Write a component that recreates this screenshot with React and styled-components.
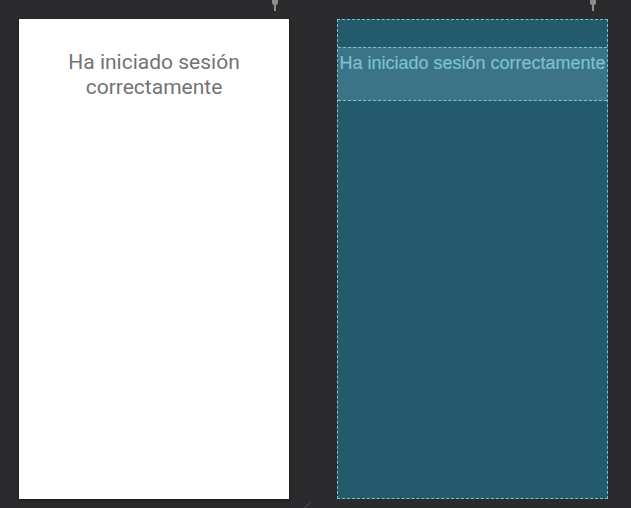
import React from 'react';
import styled, { createGlobalStyle } from 'styled-components';

const GlobalStyle = createGlobalStyle`
  html, body {
    margin: 0;
    padding: 0;
    background: #2b2b2d;
    overflow: hidden;
  }
  * {
    box-sizing: border-box;
  }
`;

const Editor = styled.div`
  position: relative;
  width: 631px;
  height: 508px;
  display: flex;
  gap: 48px;
  padding: 19px 0 0 19px;
  background: #2b2b2d;
  font-family: Roboto, 'Noto Sans', sans-serif;
`;

const Screen = styled.div`
  position: relative;
  width: ${p => p.$w}px;
  height: 480px;
`;

const DesignSurface = styled.div`
  width: 100%;
  height: 100%;
  background: #ffffff;
  box-shadow: 0 1px 3px rgba(0, 0, 0, 0.5);
  display: flex;
  flex-direction: column;
  align-items: center;
  padding-top: 31px;
`;

const Message = styled.div`
  width: 100%;
  text-align: center;
  font-size: 21px;
  line-height: 25px;
  color: #737373;
`;

const Blueprint = styled.div`
  width: 100%;
  height: 100%;
  background: #235b6c;
  border: 1px dashed #6fc6d8;
  padding-top: 27px;
`;

const BlueprintView = styled.div`
  height: 54px;
  background: #3a7486;
  border-top: 1px dashed #6fc6d8;
  border-bottom: 1px dashed #6fc6d8;
  font-family: 'Liberation Sans', Arial, sans-serif;
  font-size: 18px;
  line-height: 30px;
  color: #7ec0d2;
  text-align: center;
  white-space: nowrap;
  overflow: hidden;
  -webkit-text-stroke: 0.2px #7ec0d2;
`;

const Pin = styled.svg`
  position: absolute;
  top: -19px;
  right: ${p => p.$right}px;
`;

const ResizeHandle = styled.svg`
  position: absolute;
  left: 304px;
  bottom: 0;
`;

const PinIcon = ({ right }) => (
  <Pin $right={right} width="8" height="12" viewBox="0 0 8 12">
    <path d="M1 0h6v3.5L5 5.5V11H3V5.5L1 3.5z" fill="#8e8e8e" />
  </Pin>
);

export default function App() {
  return (
    <>
      <GlobalStyle />
      <Editor>
        <Screen $w={270}>
          <DesignSurface>
            <Message>
              Ha iniciado sesión
              <br />
              correctamente
            </Message>
          </DesignSurface>
          <PinIcon right={10} />
        </Screen>
        <Screen $w={271}>
          <Blueprint>
            <BlueprintView>Ha iniciado sesión correctamente</BlueprintView>
          </Blueprint>
          <PinIcon right={11} />
        </Screen>
        <ResizeHandle width="8" height="7" viewBox="0 0 8 7">
          <path d="M1 6.5L7 0.5" stroke="#8a8a8a" strokeWidth="1" strokeDasharray="1 1" />
        </ResizeHandle>
      </Editor>
    </>
  );
}
